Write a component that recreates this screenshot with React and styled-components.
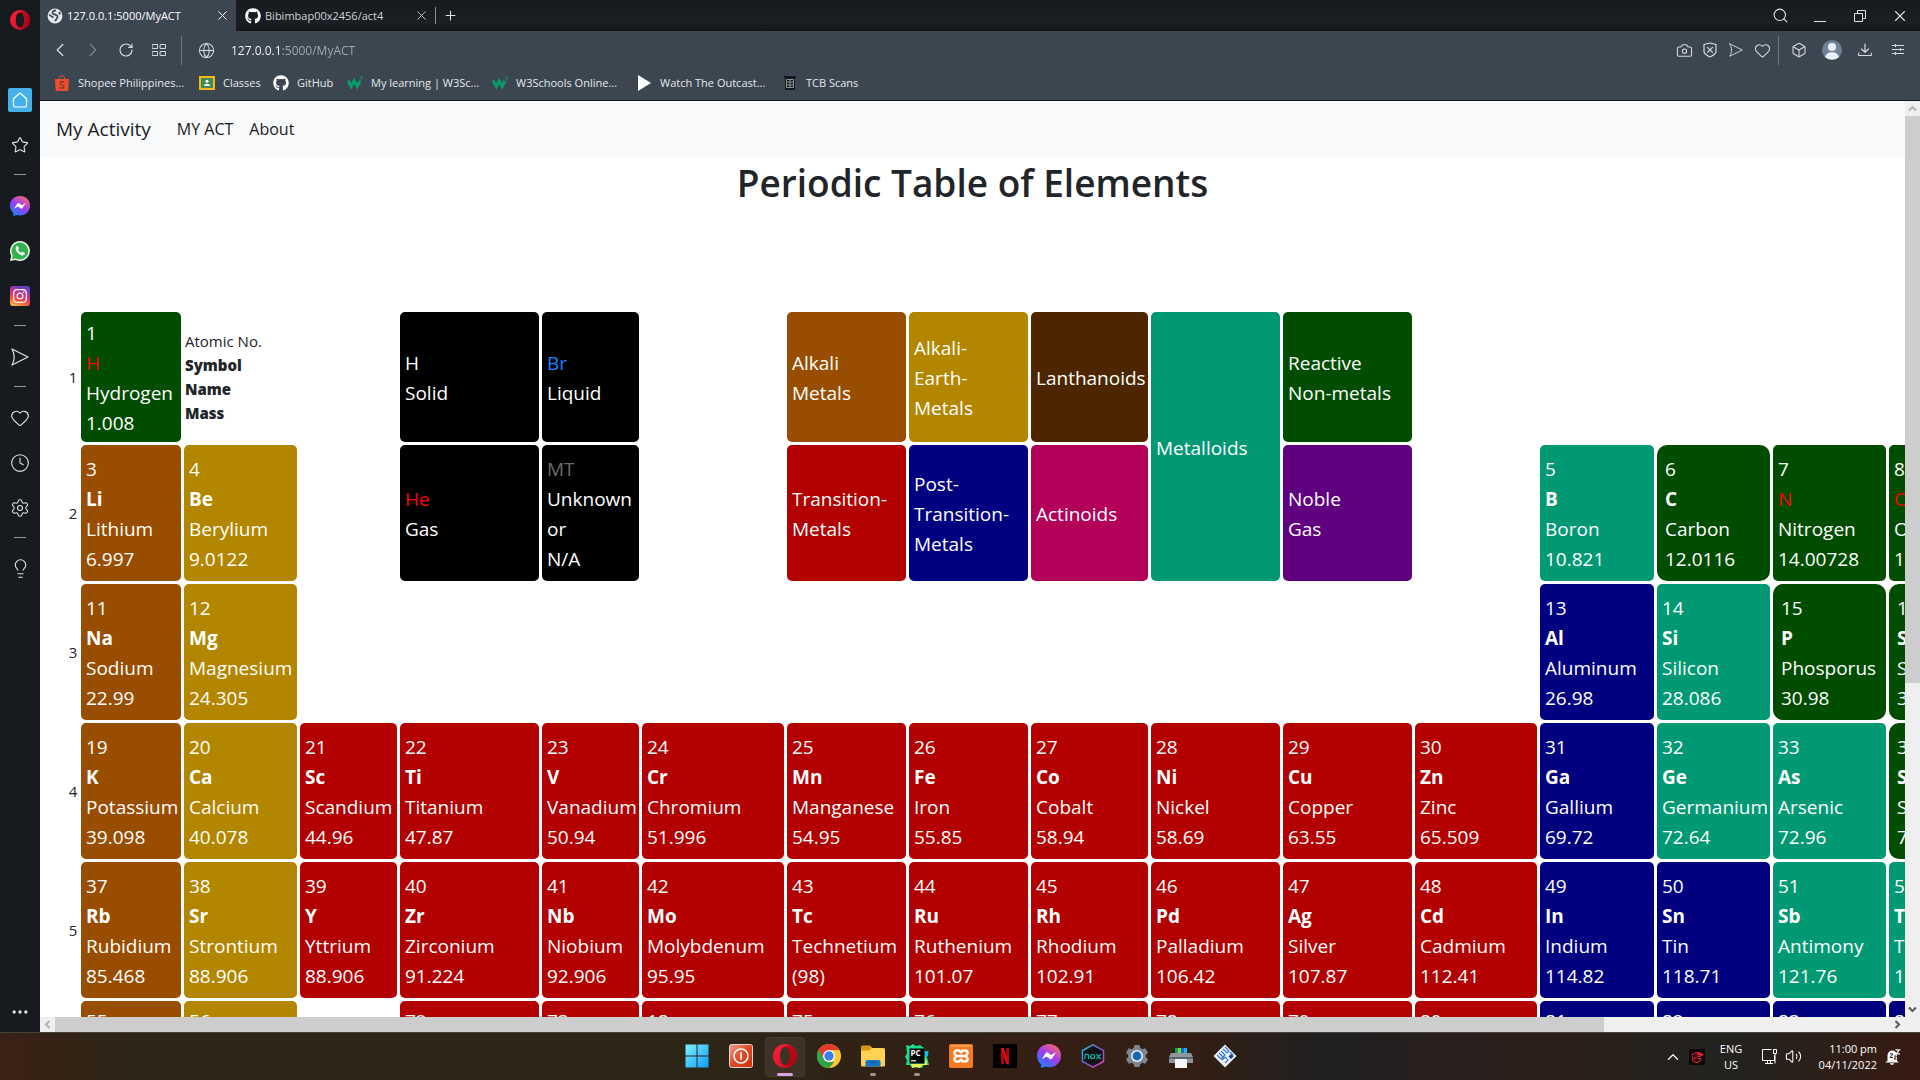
import React from "react";
import styled, { createGlobalStyle } from "styled-components";
import {
  ChevronLeft, ChevronRight, RotateCw, Globe, Search, X, Plus, Camera,
  Heart, Box, Clock, Settings, Lightbulb, Star, ChevronUp, Volume2, Ellipsis,
} from "lucide-react";
import { FaGithub, FaInstagram } from "react-icons/fa";

const Global = createGlobalStyle`
  *, *::before, *::after { box-sizing: border-box; }
  body { margin: 0; overflow: hidden; font-family: "Open Sans", "Noto Sans", sans-serif; color: #212529; background: #fff; }
  button, input { font: inherit; color: inherit; border: 0; padding: 0; background: none; }
  a { color: inherit; text-decoration: none; }
  svg { display: block; flex: none; }
`;

const Desktop = styled.div`
  height: 100vh;
  display: flex;
  flex-direction: column;
`;
const Browser = styled.div`
  flex: 1;
  min-height: 0;
  display: flex;
`;
const SideBar = styled.nav`
  width: 40px;
  flex: none;
  background: #171a1e;
  color: #dfe3e6;
  display: flex;
  flex-direction: column;
  align-items: center;
`;
const SideButton = styled.button`
  width: 40px;
  height: ${(p) => p.$h || 45}px;
  display: flex;
  align-items: center;
  justify-content: center;
`;
const HomeTile = styled.span`
  width: 24px;
  height: 24px;
  border-radius: 2px;
  background: #45b1e8;
  color: #fff;
  display: flex;
  align-items: center;
  justify-content: center;
`;
const SideDash = styled.hr`
  width: 12px;
  height: 1px;
  margin: 7px 0 8px;
  border: 0;
  background: #8b959c;
`;
const Push = styled.div`
  flex: ${(p) => (p.$size ? "none" : 1)};
  height: ${(p) => p.$size || 0}px;
`;
const Window = styled.div`
  flex: 1;
  min-width: 0;
  display: flex;
  flex-direction: column;
`;
const TabBar = styled.div`
  height: 31px;
  flex: none;
  display: flex;
  align-items: center;
  background: linear-gradient(#171b1f, #1b1e22 75%, #14171a);
  color: #dfe3e6;
`;
const Tab = styled.div`
  width: ${(p) => (p.$active ? 196 : 199)}px;
  height: 31px;
  display: flex;
  align-items: center;
  gap: 4px;
  padding: 0 4px 0 ${(p) => (p.$active ? 7 : 9)}px;
  background: ${(p) => (p.$active ? "#3b4651" : "transparent")};
  color: ${(p) => (p.$active ? "#fff" : "#cfd3d6")};
  font-size: 11px;
  line-height: 16px;
`;
const TabTitle = styled.span`
  flex: 1;
  white-space: nowrap;
`;
const IconButton = styled.button`
  width: ${(p) => p.$w || 20}px;
  height: ${(p) => p.$h || 24}px;
  display: flex;
  align-items: center;
  justify-content: center;
  opacity: ${(p) => (p.$dim ? 0.4 : 1)};
`;
const Rule = styled.span`
  width: 1px;
  height: ${(p) => p.$h}px;
  margin: 0 ${(p) => p.$m || 0}px;
  background: ${(p) => p.$c || "#6d7780"};
`;
const Grow = styled.div`
  flex: 1;
`;
const ToolBar = styled.div`
  height: 38px;
  flex: none;
  display: flex;
  align-items: center;
  padding: 0 6px 0 3px;
  background: #3b4651;
  color: #d5dade;
`;
const Address = styled.input`
  flex: 1;
  min-width: 0;
  height: 24px;
  margin-left: 7px;
  font-size: 12px;
  color: transparent;
  background: linear-gradient(90deg, #fff 50px, #a3adb6 50px);
  -webkit-background-clip: text;
  background-clip: text;
  outline: none;
`;
const Bookmarks = styled.nav`
  height: 32px;
  flex: none;
  display: flex;
  align-items: center;
  padding: 0 14px 3px;
  background: #3b4651;
  border-bottom: 1px solid #14181c;
  color: #e6e9eb;
  font-size: 11px;
  line-height: 16px;
`;
const Bookmark = styled.a`
  width: ${(p) => (p.$wide ? 145 : 74)}px;
  display: flex;
  align-items: center;
  gap: 8px;
  white-space: nowrap;
`;
const Viewport = styled.div`
  flex: 1;
  min-height: 0;
  display: grid;
  grid-template: minmax(0, 1fr) 15px / minmax(0, 1fr) 15px;
`;
const Page = styled.main`
  overflow: hidden;
  background: #fff;
`;
const NavBar = styled.nav`
  height: 56px;
  display: flex;
  align-items: center;
  gap: 16px;
  padding: 0 16px;
  background: #f8f9fa;
  color: #1a1c1e;
  font-size: 16px;
`;
const Brand = styled.a`
  font-size: 19px;
  line-height: 30px;
  margin-right: 10px;
`;
const Heading = styled.h1`
  margin: 2px 0 102px;
  font-size: 37px;
  line-height: 48px;
  font-weight: 600;
  text-align: center;
`;
const Elements = styled.table`
  table-layout: fixed;
  width: 2183px;
  margin-left: 25px;
  border-spacing: 3px;
  font-size: 15px;
  line-height: 24px;
`;
const Row = styled.tr`
  height: 136px;
  &:first-child { height: 130px; }
  &:last-child { height: 128px; }
`;
const Period = styled.th`
  padding: 0;
  font-weight: 400;
  text-align: center;
`;
const Blank = styled.td`
  padding: 0;
`;
const Key = styled.td`
  padding: 0 1px;
  font-weight: 800;
  &::first-line { font-weight: 400; }
`;
const Cell = styled.td`
  padding: 2px ${(p) => (p.$round ? 8 : 5)}px 0;
  border-radius: ${(p) => (p.$round ? 10 : 5)}px;
  background: ${(p) => p.$bg};
  color: #fff;
  font-size: 19px;
  line-height: 30px;
  white-space: nowrap;
`;
const Symbol = styled.span`
  color: ${(p) => p.$c || "#fff"};
  font-weight: ${(p) => (p.$c ? 400 : 700)};
`;
const Scroll = styled.div`
  display: flex;
  flex-direction: ${(p) => (p.$vertical ? "column" : "row")};
  background: #efefef;
`;
const ScrollArrow = styled.button`
  width: 15px;
  height: 15px;
  flex: none;
  display: flex;
  align-items: center;
  justify-content: center;
  color: ${(p) => (p.$off ? "#b4b4b4" : "#606060")};
  transform: rotate(${(p) => p.$turn || 0}deg);
`;
const Thumb = styled.div`
  flex: ${(p) => p.$part};
  background: #cdcdcd;
`;
const Track = styled.div`
  flex: ${(p) => p.$part};
`;
const Corner = styled.div`
  background: #efefef;
`;
const TaskBar = styled.footer`
  height: 48px;
  flex: none;
  display: grid;
  grid-template-columns: 1fr auto 1fr;
  align-items: center;
  border-top: 1px solid #46413a;
  background: linear-gradient(90deg, #3a2115 0, #2d2616 7%, #2c2616 36%, #331f14 52%, #331e13 62%, #202022 69%, #2d1f1a 80%, #22231f 90%, #371b12 100%);
  color: #fff;
`;
const Apps = styled.div`
  grid-column: 2;
  display: flex;
  gap: 4px;
  padding-left: 1px;
`;
const AppButton = styled.button`
  width: 40px;
  height: 40px;
  display: grid;
  grid-template-rows: 1fr 3px;
  justify-items: center;
  align-items: center;
  padding: 3px 0 1px;
  border-radius: 4px;
  background: ${(p) => (p.$active ? "#ffffff12" : "none")};
  box-shadow: ${(p) => (p.$active ? "inset 0 0 0 1px #ffffff0d" : "none")};
`;
const Running = styled.span`
  width: ${(p) => (p.$state === "active" ? 16 : 6)}px;
  height: 3px;
  border-radius: 2px;
  background: ${(p) => (p.$state === "active" ? "#d5a5e3" : p.$state ? "#9a958d" : "transparent")};
`;
const Tray = styled.div`
  display: flex;
  align-items: center;
  justify-content: flex-end;
  padding-right: 19px;
  font-size: 11px;
  line-height: 16px;
`;
const TrayText = styled.div`
  width: ${(p) => p.$w}px;
  text-align: ${(p) => p.$align};
  margin-right: ${(p) => (p.$align === "right" ? 8 : 4)}px;
`;

/* ---------- drawings ---------- */
const line = { fill: "none", stroke: "currentColor", strokeWidth: 1.2, strokeLinejoin: "round", strokeLinecap: "round" };

const OperaLogo = ({ size = 20, id }) => (
  <svg width={size} height={size} viewBox="0 0 24 24">
    <defs>
      <linearGradient id={id} x1="0" y1="0" x2="1" y2="1">
        <stop offset="0" stopColor="#ff2035" /><stop offset="0.6" stopColor="#e0142b" /><stop offset="1" stopColor="#a5000f" />
      </linearGradient>
    </defs>
    <path fillRule="evenodd" fill={`url(#${id})`} d="M12 0a12 12 0 1 0 0 24a12 12 0 1 0 0-24zM12 3c3.200 0 5 4.200 5 9s-1.800 9-5 9s-5-4.200-5-9s1.800-9 5-9z" />
    <path fill="#a3000f" d="M12 3c2-1.800 5-1.600 7.500 0A12 12 0 0 1 19.500 21c-2.500 1.600-5.500 1.800-7.500 0c3.200 0 5-4.200 5-9s-1.800-9-5-9z" opacity="0.65" />
  </svg>
);
const Messenger = ({ size = 20, id }) => (
  <svg width={size} height={size} viewBox="0 0 24 24">
    <defs>
      <linearGradient id={id} x1="0.15" y1="1" x2="0.8" y2="0">
        <stop offset="0" stopColor="#0a8bff" /><stop offset="0.5" stopColor="#9a3cf5" /><stop offset="1" stopColor="#ff6a6a" />
      </linearGradient>
    </defs>
    <path fill={`url(#${id})`} d="M12 0c6.800 0 12 5 12 11.700S18.800 23.300 12 23.300c-1.200 0-2.400-.2-3.500-.5L4 24l.1-3.700C1.600 18.300 0 15.300 0 11.700C0 5 5.200 0 12 0z" />
    <path fill="#fff" d="M4.800 15.200l3.700-5.900a1.800 1.800 0 0 1 2.600-.5l2.900 2.200l4.900-2.700l-3.600 5.900a1.800 1.800 0 0 1-2.700.5l-2.900-2.200z" />
  </svg>
);
const Instagram = () => (
  <svg width="20" height="20" viewBox="0 0 20 20">
    <defs>
      <linearGradient id="insta" x1="0.1" y1="1" x2="0.5" y2="0">
        <stop offset="0" stopColor="#ffc34a" /><stop offset="0.35" stopColor="#f4523c" /><stop offset="0.65" stopColor="#c92f8c" /><stop offset="1" stopColor="#6442c8" />
      </linearGradient>
    </defs>
    <rect width="20" height="20" rx="3" fill="url(#insta)" />
    <FaInstagram x="2" y="2" size="16" color="#fff" />
  </svg>
);
const WhatsApp = () => (
  <svg width="20" height="20" viewBox="0 0 20 20">
    <path d="M10 0a10 10 0 1 1-4.500 19L0 20l1.200-5.200A10 10 0 0 1 10 0z" fill="#e9f3ea" />
    <path d="M10 1.500a8.500 8.500 0 1 1-4.200 16L2 18.200l.9-3.600A8.500 8.500 0 0 1 10 1.500z" fill="#33b14b" />
    <path d="M6.600 5.200c.8-.6 1.400-.2 1.700.7l.6 1.500c.2.600-.6 1-.8 1.500c.7 1.400 1.700 2.200 3.100 2.800c.5-.3.900-1.200 1.500-.9l1.700.9c.8.500.3 1.900-.6 2.400c-1.400.8-3.400-.1-5-1.300c-1.500-1.200-3.100-3.300-3.200-5.200c0-1 .4-1.900 1-2.400z" fill="#fff" />
  </svg>
);
const HomeIcon = () => (
  <svg width="16" height="16" viewBox="0 0 16 16" {...line}><path d="M1.500 6.800L8 1l6.500 5.800v6.400a1.800 1.800 0 0 1-1.800 1.800H3.300a1.800 1.800 0 0 1-1.800-1.800z" /></svg>
);
const SendIcon = ({ size = 18 }) => (
  <svg width={size} height={size} viewBox="0 0 18 18" {...line}><path d="M1 1l16 8L1 17c3-5.500 3-10.500 0-16z" /></svg>
);
const TabsIcon = () => (
  <svg width="14" height="12" viewBox="0 0 14 12" {...line} strokeWidth="1">
    <path d="M.5.5h5v4h-5zM8.500.5h5v4h-5zM.5 7.500h5v4h-5zM8.500 7.500h5v4h-5z" />
  </svg>
);
const ShieldX = () => (
  <svg width="14" height="16" viewBox="0 0 14 16" {...line}><path d="M7 1L13 2.500v7c0 2.500-3 4-6 5.500c-3-1.500-6-3-6-5.500v-7zM4.500 5.300l5 5M9.500 5.300l-5 5" /></svg>
);
const Restore = () => (
  <svg width="12" height="12" viewBox="0 0 12 12" fill="none" stroke="currentColor"><path d="M.5 3.500h8v8h-8zM3.500 3.500v-3h8v8h-3" /></svg>
);
const Download = () => (
  <svg width="14" height="14" viewBox="0 0 14 14" {...line}><path d="M7 1v8M3.500 6L7 9.300L10.500 6M.8 10v2.500h12.400V10" /></svg>
);
const Sliders = () => (
  <svg width="12" height="12" viewBox="0 0 12 12" fill="none" stroke="currentColor"><path d="M0 1.500h12M0 5.500h12M0 9.500h12M3.500 0v3M8.500 4v3M3.500 8v3" /></svg>
);
const Avatar = () => (
  <svg width="20" height="20" viewBox="0 0 20 20">
    <circle cx="10" cy="10" r="10" fill="#6f8397" />
    <circle cx="10" cy="7" r="4" fill="#e8f0f8" />
    <path d="M3 17c1-3.500 4-4.800 7-4.800s6 1.300 7 4.800a10 10 0 0 1-14 0z" fill="#e8f0f8" />
  </svg>
);
const SiteGlobe = () => (
  <svg width="16" height="16" viewBox="0 0 14 14">
    <circle cx="7" cy="7" r="6.500" fill="#e6e9ec" />
    <path d="M8 2C5.500 2 4.500 3 4.800 4.500C5 6 8.500 5.500 9.200 7c.6 1.500-1.200 2.800-2.200 4.500M2 5.500c1 2 2.500 1.500 3.500 3M10.500 3.500l1 2" stroke="#3b4651" strokeWidth="1.500" fill="none" />
  </svg>
);
const Shopee = () => (
  <svg width="16" height="16" viewBox="0 0 16 16">
    <path d="M5 4.500C5 2 6 .8 8 .8s3 1.200 3 3.700" stroke="#ee4d2d" strokeWidth="1" fill="none" />
    <path d="M1 4h14l-.8 12H1.800z" fill="#ee4d2d" />
    <path d="M10 7.300C8.500 6.200 6 6.500 6.200 8.300c.2 1.600 3.800 1.300 3.700 3.300c-.2 1.800-2.600 1.900-4.200.7" stroke="#6c3a34" strokeWidth="1.200" fill="none" />
  </svg>
);
const Classes = () => (
  <svg width="16" height="14" viewBox="0 0 16 14">
    <path fill="#f6b913" d="M0 0h16v14H0z" /><path fill="#3d8b56" d="M2 2h12v10H2z" />
    <circle cx="8" cy="5.300" r="1.500" fill="#fff" /><path d="M5 10c0-3 6-3 6 0z" fill="#fff" />
  </svg>
);
const W3 = () => (
  <svg width="16" height="16" viewBox="0 0 16 16" fill="none" stroke="#0a9b6b">
    <path d="M1 5.500l3.200 6l3-5.500l3 5.500L13 6" strokeWidth="3" /><path d="M13 1.500h2.500l-1.500 1.500c2 0 2 2.200-.8 2" strokeWidth="0.800" />
  </svg>
);
const Play = () => (
  <svg width="15" height="16" viewBox="0 0 15 16"><path d="M1 0l13 8l-13 8z" fill="#fff" /></svg>
);
const Scans = () => (
  <svg width="16" height="16" viewBox="0 0 16 16">
    <path fill="#16191c" d="M2 1h12v2h-1v12H3V3H2z" /><path d="M4.500 4.500h7v8h-7zM8 4v9M5 7h6M5 10h6" stroke="#a9b0b6" strokeWidth="0.800" fill="none" />
  </svg>
);
const Arrow = () => (
  <svg width="9" height="7" viewBox="0 0 9 7" fill="none" stroke="currentColor" strokeWidth="2.200"><path d="M1 5.500l3.500-3.500L8 5.500" /></svg>
);

const WindowsLogo = () => (
  <svg width="24" height="24" viewBox="0 0 24 24">
    <defs><linearGradient id="win" x1="0" y1="0" x2="1" y2="1"><stop offset="0" stopColor="#7df0ff" /><stop offset="1" stopColor="#0d9bff" /></linearGradient></defs>
    <path fill="url(#win)" d="M.5.5h11v11H.5zM12.500.5h11v11h-11zM.5 12.500h11v11H.5zM12.500 12.500h11v11h-11z" />
  </svg>
);
const PowerApp = () => (
  <svg width="24" height="24" viewBox="0 0 24 24">
    <defs><linearGradient id="pow" x1="0" y1="0" x2="1" y2="1"><stop offset="0" stopColor="#f0a08a" /><stop offset="0.500" stopColor="#dc4a28" /><stop offset="1" stopColor="#d03208" /></linearGradient></defs>
    <rect x="0.500" y="0.500" width="23" height="23" rx="2" fill="url(#pow)" stroke="#ead3cb" />
    <circle cx="12" cy="12" r="7" fill="none" stroke="#fff" strokeWidth="1.500" /><path d="M12 8v8" stroke="#fff" strokeWidth="1.500" />
  </svg>
);
const Chrome = () => (
  <svg width="24" height="24" viewBox="0 0 24 24">
    <circle cx="12" cy="12" r="12" fill="#fcc934" />
    <path d="M12 6h10.400H1.600l5.200 9z" fill="#e33b2e" />
    <path d="M12 12L1.600 6a12 12 0 0 1 20.800 0H12z" fill="#e33b2e" />
    <path d="M1.600 6l5.200 9L12 18h5.200L12 24A12 12 0 0 1 1.600 6z" fill="#2ba24c" />
    <circle cx="12" cy="12" r="6" fill="#fff" /><circle cx="12" cy="12" r="4.700" fill="#3a7ff0" />
  </svg>
);
const Folder = () => (
  <svg width="24" height="24" viewBox="0 0 24 24">
    <path d="M0 3a1.500 1.500 0 0 1 1.500-1.500H9L11.500 4v4H0z" fill="#d99a10" />
    <path d="M0 6.500h8L11 4h11.500A1.500 1.500 0 0 1 24 5.500v16a1 1 0 0 1-1 1H1a1 1 0 0 1-1-1z" fill="#ffd253" />
    <path d="M4.500 22.500V18a2 2 0 0 1 2-2h11a2 2 0 0 1 2 2v4.500z" fill="#1475c4" /><path d="M8.500 18.500h7" stroke="#0c599b" strokeWidth="1.200" />
  </svg>
);
const PyCharm = () => (
  <svg width="24" height="24" viewBox="0 0 24 24">
    <path d="M1 1l4 1l3-2l3 2l4-1l4 3l1 4l3-1l-1 6l2 8l-5 0l-2 3l-5-1l-4 1l-3-3l-4 0l1-5l-2-3l2-4z" fill="#22d88f" />
    <path d="M20 7l3.500 0l-.5 5l-3 0z" fill="#11b8f0" /><path d="M6 20h13l2-6l1 7l-5 0l-2 3l-5-1l-3 1z" fill="#eaf052" />
    <path fill="#050505" d="M4.500 4.500h15v15h-15z" />
    <text x="5.500" y="12" fontFamily="Open Sans" fontWeight="700" fontSize="8" fill="#fff">PC</text>
    <path d="M6 16.800h5" stroke="#fff" strokeWidth="1.200" />
  </svg>
);
const Xampp = () => (
  <svg width="24" height="24" viewBox="0 0 24 24">
    <rect width="24" height="24" rx="2" fill="#f47b22" /><path d="M2 2h20" stroke="#ffba80" />
    <path d="M12 8.500L10.200 6.500H7.500a2.400 2.400 0 0 0-1.500 4L7.500 12L6 13.500a2.400 2.400 0 0 0 1.500 4h2.700L12 15.500l1.800 2h2.700a2.400 2.400 0 0 0 1.500-4L16.500 12l1.500-1.500a2.400 2.400 0 0 0-1.500-4h-2.700zM8 12h8" fill="none" stroke="#fff" strokeWidth="2.400" strokeLinejoin="round" />
  </svg>
);
const Netflix = () => (
  <svg width="24" height="24" viewBox="0 0 24 24">
    <path fill="#000" d="M0 0h24v24H0z" /><path fill="#b10710" d="M8 4h2.800v16L8 20.500zM13.200 4H16v16.500l-2.800-.5z" /><path fill="#e50914" d="M8 4h2.800L16 20.500l-2.800-.5z" />
  </svg>
);
const Nox = () => (
  <svg width="24" height="24" viewBox="0 0 24 24" fill="none">
    <defs><linearGradient id="nox" x1="0" y1="0" x2="1" y2="1"><stop offset="0" stopColor="#20c8e8" /><stop offset="0.500" stopColor="#7a55c8" /><stop offset="1" stopColor="#f044c8" /></linearGradient></defs>
    <path d="M12 .8L22.500 6.500v11L12 23.200L1.500 17.500v-11z" fill="#111417" stroke="url(#nox)" strokeWidth="1.500" />
    <path d="M4 15v-3.500c0-1.800 3.600-1.800 3.600 0V15M9.600 12.500a2 2 0 1 0 4 0a2 2 0 1 0-4 0M15.500 10.200l4.300 4.800M19.800 10.200L15.500 15" stroke="#0fb8a6" strokeWidth="1.200" />
  </svg>
);
const SettingsApp = () => (
  <svg width="24" height="24" viewBox="0 0 24 24">
    <path fill="#7d868e" d="M9.500 1h5l.8 3l2 1.200l3-.9l2.700 4.400l-2.100 2.200v2.200l2.100 2.200l-2.700 4.400l-3-.9l-2 1.200l-.8 3h-5l-.8-3l-2-1.200l-3 .9L1 15.300l2.100-2.200v-2.200L1 8.700l2.700-4.400l3 .9l2-1.200z" />
    <circle cx="12" cy="12" r="6" fill="#e5edf4" /><circle cx="12" cy="12" r="4.400" fill="#0f67b5" />
  </svg>
);
const Printer = () => (
  <svg width="24" height="24" viewBox="0 0 24 24">
    <path fill="#14a05a" d="M6 4h3v6H6z" /><path fill="#80d630" d="M9 4h3v6H9z" /><path fill="#1464e0" d="M12 4h3v6h-3z" /><path fill="#23aef0" d="M15 4h3v6h-3z" />
    <path fill="#8d969d" d="M2 9h20l2 4v6H0v-6z" /><path fill="#5c646b" d="M0 13h24v2H0z" /><path fill="#f4f6f8" d="M6 15h12v9H6z" />
  </svg>
);
const Diamond = () => (
  <svg width="24" height="24" viewBox="0 0 24 24">
    <path d="M12 .5L23.500 12L12 23.500L.5 12z" fill="#eef4fc" />
    <path d="M12 3l4 4l-2 2l-4-4M8 7l4 4l-2 2l-4-4M4 11l4 4l2-2M9 16l3-3l3 3l-3 3M17 8l3 3l-3 3" stroke="#2f74cf" strokeWidth="1.200" fill="none" /><path d="M18 10l2.500 2.500L18 15l-2.500-2.500z" fill="#123f98" />
  </svg>
);
const Garena = () => (
  <svg width="16" height="16" viewBox="0 0 16 16">
    <rect width="16" height="16" rx="1" fill="#0a0809" />
    <path d="M2.500 6.500C5 3 9.500 3 13 4.800c-3-.4-4.500.2-5.500.9h6c-1 1.500-3 1.800-5 1.800M4 7c-2 4 0 6.500 4 6.300c2.500-.2 4-1.800 3.800-4H8.500M5 11c0-2 1.500-3 3-2.800" stroke="#e0202e" strokeWidth="1.200" fill="none" />
  </svg>
);
const Network = () => (
  <svg width="17" height="17" viewBox="0 0 17 17" fill="none" stroke="#fff"><path d="M10.500 1.500h-9v11h12v-5M4 15.500h8M6.500 12.500v3M9.500 12.500v3M12.500 1.500h3v4h-3zM14 5.500v10" /></svg>
);
const Bell = () => (
  <svg width="16" height="16" viewBox="0 0 16 16">
    <path d="M2.500 12V6.500C2.500 3.500 4.500 1.500 7 1.500s5 2 5 5V12l1.500 1v.5h-13V13zM5 14.200h4c0 2-4 2-4 0z" fill="#fff" />
    <path d="M10.500.8h4l-3.500 4h4" stroke="#fff" strokeWidth="1.200" fill="none" /><path d="M5 5h3L5 8.500h3M9 7h2.500L9 10h2.500" stroke="#2c211c" fill="none" />
  </svg>
);

/* ---------- data ---------- */
const C = {
  alkali: "#994d00", earth: "#b38600", lan: "#4d2600", metalloid: "#009973", non: "#004d00",
  trans: "#b30000", post: "#000080", act: "#b30059", noble: "#600080",
};
const RED = "#ff0000";
const el = (bg, n, sym, name, mass, extra = {}) => ({ bg: C[bg], n, sym, name, mass, ...extra });
const gap = (span) => ({ gap: span });
const box = (bg, text, extra = {}) => ({ bg, text, ...extra });

const rows = [
  [
    el("non", 1, "H", "Hydrogen", "1.008", { c: RED }), { key: true }, gap(1),
    box("#000", ["Solid"], { lead: "H", c: "#fff" }), box("#000", ["Liquid"], { lead: "Br", c: "#1f80ff" }), gap(1),
    box(C.alkali, ["Alkali", "Metals"]), box(C.earth, ["Alkali-", "Earth-", "Metals"]), box(C.lan, ["Lanthanoids"]),
    box(C.metalloid, ["Metalloids"], { rows: 2 }), box(C.non, ["Reactive", "Non-metals"]), gap(7),
  ],
  [
    el("alkali", 3, "Li", "Lithium", "6.997"), el("earth", 4, "Be", "Berylium", "9.0122"), gap(1),
    box("#000", ["Gas"], { lead: "He", c: RED }), box("#000", ["Unknown", "or", "N/A"], { lead: "MT", c: "#6c6c6c" }), gap(1),
    box(C.trans, ["Transition-", "Metals"]), box(C.post, ["Post-", "Transition-", "Metals"]), box(C.act, ["Actinoids"]),
    box(C.noble, ["Noble", "Gas"]), gap(1),
    el("metalloid", 5, "B", "Boron", "10.821"), el("non", 6, "C", "Carbon", "12.0116", { round: true }),
    el("non", 7, "N", "Nitrogen", "14.00728", { c: RED }), el("non", 8, "O", "Oxygen", "15.999", { c: RED }), gap(2),
  ],
  [
    el("alkali", 11, "Na", "Sodium", "22.99"), el("earth", 12, "Mg", "Magnesium", "24.305"), gap(10),
    el("post", 13, "Al", "Aluminum", "26.98"), el("metalloid", 14, "Si", "Silicon", "28.086"),
    el("non", 15, "P", "Phosporus", "30.98", { round: true }), el("non", 16, "S", "Sulfur", "32.06", { round: true }), gap(2),
  ],
  [
    el("alkali", 19, "K", "Potassium", "39.098"), el("earth", 20, "Ca", "Calcium", "40.078"), el("trans", 21, "Sc", "Scandium", "44.96"),
    el("trans", 22, "Ti", "Titanium", "47.87"), el("trans", 23, "V", "Vanadium", "50.94"), el("trans", 24, "Cr", "Chromium", "51.996"),
    el("trans", 25, "Mn", "Manganese", "54.95"), el("trans", 26, "Fe", "Iron", "55.85"), el("trans", 27, "Co", "Cobalt", "58.94"),
    el("trans", 28, "Ni", "Nickel", "58.69"), el("trans", 29, "Cu", "Copper", "63.55"), el("trans", 30, "Zn", "Zinc", "65.509"),
    el("post", 31, "Ga", "Gallium", "69.72"), el("metalloid", 32, "Ge", "Germanium", "72.64"), el("metalloid", 33, "As", "Arsenic", "72.96"),
    el("non", 34, "Se", "Selenium", "78.97", { round: true }), gap(2),
  ],
  [
    el("alkali", 37, "Rb", "Rubidium", "85.468"), el("earth", 38, "Sr", "Strontium", "88.906"), el("trans", 39, "Y", "Yttrium", "88.906"),
    el("trans", 40, "Zr", "Zirconium", "91.224"), el("trans", 41, "Nb", "Niobium", "92.906"), el("trans", 42, "Mo", "Molybdenum", "95.95"),
    el("trans", 43, "Tc", "Technetium", "(98)"), el("trans", 44, "Ru", "Ruthenium", "101.07"), el("trans", 45, "Rh", "Rhodium", "102.91"),
    el("trans", 46, "Pd", "Palladium", "106.42"), el("trans", 47, "Ag", "Silver", "107.87"), el("trans", 48, "Cd", "Cadmium", "112.41"),
    el("post", 49, "In", "Indium", "114.82"), el("post", 50, "Sn", "Tin", "118.71"), el("metalloid", 51, "Sb", "Antimony", "121.76"),
    el("metalloid", 52, "Te", "Tellurium", "127.60"), gap(2),
  ],
  [
    el("alkali", 55, "Cs", "Cesium", "132.91"), el("earth", 56, "Ba", "Barium", "137.33"), gap(1),
    el("trans", 72, "Hf", "Hafnium", "178.49"), el("trans", 73, "Ta", "Tantalum", "180.95"), el("trans", 18, "W", "Tungsten", "183.84"),
    el("trans", 75, "Re", "Rhenium", "186.21"), el("trans", 76, "Os", "Osmium", "190.23"), el("trans", 77, "Ir", "Iridium", "192.22"),
    el("trans", 78, "Pt", "Platinum", "195.08"), el("trans", 79, "Au", "Gold", "196.97"), el("trans", 80, "Hg", "Mercury", "200.59"),
    el("post", 81, "Tl", "Thallium", "204.38"), el("post", 82, "Pb", "Lead", "207.2"), el("post", 83, "Bi", "Bismuth", "208.98"),
    el("post", 84, "Po", "Polonium", "(209)"), gap(2),
  ],
];
const widths = [10, 100, 113, 97, 139, 97, 142, 119, 119, 117, 129, 129, 122, 114, 113, 113, 110, 120, 120];

function Item({ d }) {
  if (d.gap) return <Blank colSpan={d.gap} />;
  if (d.key) return <Key>Atomic No.<br />Symbol<br />Name<br />Mass</Key>;
  if (d.text)
    return (
      <Cell $bg={d.bg} rowSpan={d.rows}>
        {d.lead && <><Symbol $c={d.c}>{d.lead}</Symbol><br /></>}
        {d.text.map((t, i) => <React.Fragment key={t}>{i > 0 && <br />}{t}</React.Fragment>)}
      </Cell>
    );
  return (
    <Cell $bg={d.bg} $round={d.round}>
      {d.n}<br /><Symbol $c={d.c}>{d.sym}</Symbol><br />{d.name}<br />{d.mass}
    </Cell>
  );
}

const apps = [
  ["Start", <WindowsLogo />], ["Power", <PowerApp />], ["Opera", <OperaLogo size={24} id="op2" />, "active"],
  ["Chrome", <Chrome />], ["Files", <Folder />, "open"], ["PyCharm", <PyCharm />, "open"], ["XAMPP", <Xampp />],
  ["Netflix", <Netflix />], ["Messenger", <Messenger size={24} id="ms2" />], ["Nox", <Nox />],
  ["Settings", <SettingsApp />], ["Printer", <Printer />], ["Scanner", <Diamond />],
];
const bookmarks = [
  ["Shopee Philippines...", <Shopee />, true], ["Classes", <Classes />], ["GitHub", <FaGithub size={16} color="#fff" />],
  ["My learning | W3Sc...", <W3 />, true], ["W3Schools Online...", <W3 />, true], ["Watch The Outcast...", <Play />, true], ["TCB Scans", <Scans />],
];

export default function App() {
  return (
    <Desktop>
      <Global />
      <Browser>
        <SideBar aria-label="Sidebar">
          <SideButton $h={40} aria-label="Menu"><OperaLogo id="op1" /></SideButton>
          <Push $size={37} />
          <SideButton aria-label="Home"><HomeTile><HomeIcon /></HomeTile></SideButton>
          <SideButton aria-label="Pinboards"><Star size={18} strokeWidth={1.5} /></SideButton>
          <SideDash />
          <SideButton aria-label="Messenger"><Messenger id="ms1" /></SideButton>
          <SideButton aria-label="WhatsApp"><WhatsApp /></SideButton>
          <SideButton aria-label="Instagram"><Instagram /></SideButton>
          <SideDash />
          <SideButton aria-label="My Flow"><SendIcon /></SideButton>
          <SideDash />
          <SideButton aria-label="Bookmarks"><Heart size={20} strokeWidth={1.3} /></SideButton>
          <SideButton aria-label="History"><Clock size={20} strokeWidth={1.3} /></SideButton>
          <SideButton aria-label="Settings"><Settings size={20} strokeWidth={1.3} /></SideButton>
          <SideDash />
          <SideButton aria-label="Tips"><Lightbulb size={21} strokeWidth={1.3} /></SideButton>
          <Push />
          <SideButton $h={40} aria-label="More"><Ellipsis size={20} /></SideButton>
        </SideBar>
        <Window>
          <TabBar>
            <Tab $active>
              <SiteGlobe /><TabTitle>127.0.0.1:5000/MyACT</TabTitle>
              <IconButton aria-label="Close tab"><X size={15} strokeWidth={1.6} /></IconButton>
            </Tab>
            <Tab>
              <FaGithub size={16} color="#fff" /><TabTitle>Bibimbap00x2456/act4</TabTitle>
              <IconButton aria-label="Close tab"><X size={15} strokeWidth={1.4} /></IconButton>
            </Tab>
            <Rule $h={17} $c="#8a9095" />
            <IconButton $w={28} aria-label="New tab"><Plus size={15} strokeWidth={1.7} /></IconButton>
            <Grow />
            <IconButton $w={40} aria-label="Search"><Search size={17} strokeWidth={1.5} /></IconButton>
            <IconButton $w={40} aria-label="Minimise"><svg width="12" height="12"><path d="M0 11.500h12" stroke="currentColor" /></svg></IconButton>
            <IconButton $w={40} aria-label="Restore"><Restore /></IconButton>
            <IconButton $w={40} aria-label="Close"><X size={18} strokeWidth={1.5} /></IconButton>
          </TabBar>
          <ToolBar>
            <IconButton $w={33} aria-label="Back"><ChevronLeft size={22} strokeWidth={1.4} /></IconButton>
            <IconButton $w={33} $dim aria-label="Forward"><ChevronRight size={22} strokeWidth={1.4} /></IconButton>
            <IconButton $w={33} aria-label="Reload"><RotateCw size={16} strokeWidth={1.7} /></IconButton>
            <IconButton $w={33} aria-label="Tabs"><TabsIcon /></IconButton>
            <Rule $h={29} $m={6} />
            <IconButton $w={36} aria-label="Site information"><Globe size={17} strokeWidth={1.5} /></IconButton>
            <Address aria-label="Address" defaultValue="127.0.0.1:5000/MyACT" />
            <IconButton $w={26} aria-label="Snapshot"><Camera size={17} strokeWidth={1.5} /></IconButton>
            <IconButton $w={26} aria-label="Ad blocker"><ShieldX /></IconButton>
            <IconButton $w={26} aria-label="Send"><SendIcon size={14} /></IconButton>
            <IconButton $w={26} aria-label="Save"><Heart size={17} strokeWidth={1.5} /></IconButton>
            <Rule $h={29} $m={3} />
            <IconButton $w={33} aria-label="Wallet"><Box size={16} strokeWidth={1.6} /></IconButton>
            <IconButton $w={33} aria-label="Profile"><Avatar /></IconButton>
            <IconButton $w={33} aria-label="Downloads"><Download /></IconButton>
            <IconButton $w={33} aria-label="Easy setup"><Sliders /></IconButton>
          </ToolBar>
          <Bookmarks aria-label="Bookmarks">
            {bookmarks.map(([name, icon, wide]) => (
              <Bookmark key={name} href="#" $wide={wide}>{icon}<span>{name}</span></Bookmark>
            ))}
          </Bookmarks>
          <Viewport>
            <Page>
              <NavBar>
                <Brand href="#">My Activity</Brand>
                <a href="#">MY ACT</a>
                <a href="#">About</a>
              </NavBar>
              <Heading>Periodic Table of Elements</Heading>
              <Elements>
                <colgroup>{widths.map((w, i) => <col key={i} width={w} />)}</colgroup>
                <tbody>
                  {rows.map((cells, r) => (
                    <Row key={r}>
                      <Period scope="row">{r + 1}</Period>
                      {cells.map((d, i) => <Item key={i} d={d} />)}
                    </Row>
                  ))}
                </tbody>
              </Elements>
            </Page>
            <Scroll $vertical>
              <ScrollArrow $off aria-label="Scroll up"><Arrow /></ScrollArrow>
              <Thumb $part={567} /><Track $part={319} />
              <ScrollArrow $turn={180} aria-label="Scroll down"><Arrow /></ScrollArrow>
            </Scroll>
            <Scroll>
              <ScrollArrow $off $turn={-90} aria-label="Scroll left"><Arrow /></ScrollArrow>
              <Thumb $part={1549} /><Track $part={286} />
              <ScrollArrow $turn={90} aria-label="Scroll right"><Arrow /></ScrollArrow>
            </Scroll>
            <Corner />
          </Viewport>
        </Window>
      </Browser>
      <TaskBar>
        <Apps>
          {apps.map(([name, icon, state]) => (
            <AppButton key={name} aria-label={name} $active={state === "active"}>{icon}<Running $state={state} /></AppButton>
          ))}
        </Apps>
        <Tray>
          <IconButton $w={24} aria-label="Hidden icons"><ChevronUp size={18} strokeWidth={1.6} /></IconButton>
          <IconButton $w={24} aria-label="Garena"><Garena /></IconButton>
          <TrayText $w={44} $align="center">ENG<br />US</TrayText>
          <IconButton $w={24} aria-label="Network"><Network /></IconButton>
          <IconButton $w={24} aria-label="Volume"><Volume2 size={17} strokeWidth={1.5} /></IconButton>
          <TrayText $w={72} $align="right">11:00 pm<br />04/11/2022</TrayText>
          <IconButton $w={16} aria-label="Notifications"><Bell /></IconButton>
        </Tray>
      </TaskBar>
    </Desktop>
  );
}
